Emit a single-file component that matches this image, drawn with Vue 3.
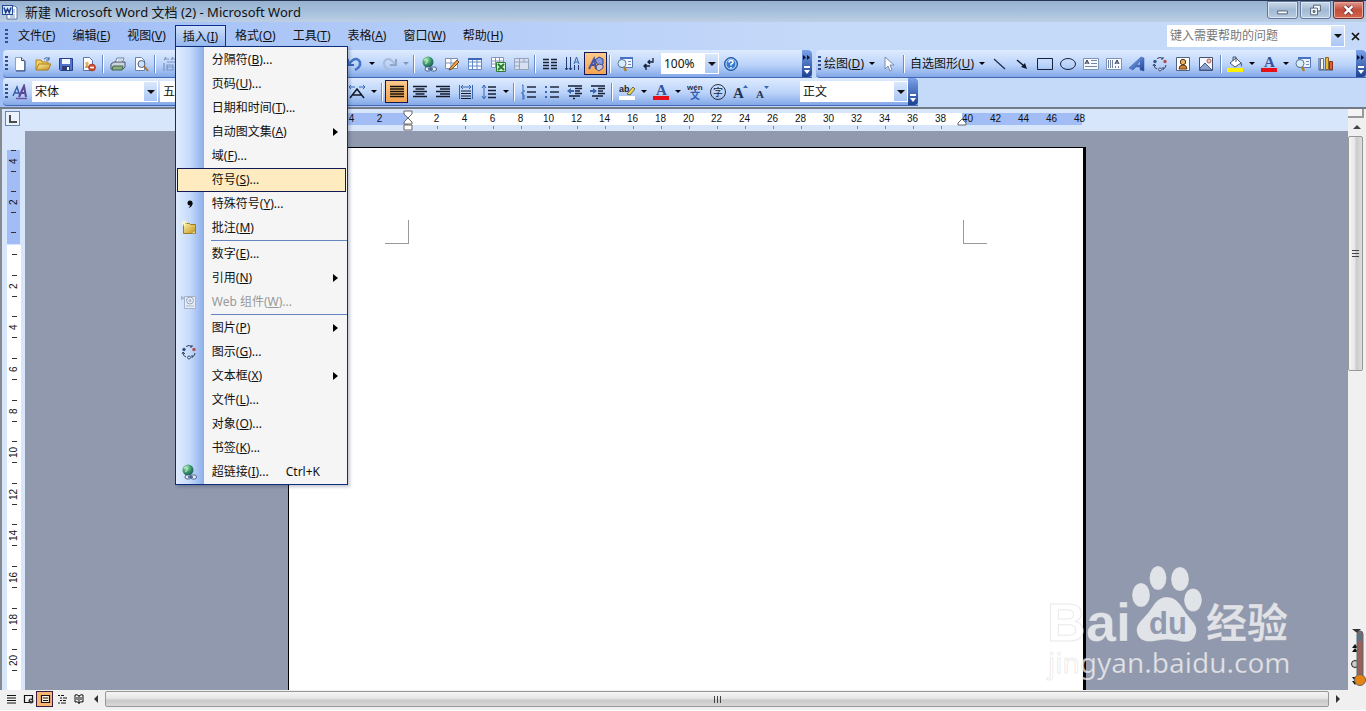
<script setup>
import { ref } from 'vue'

const menus = [
  ['文件', 'F'], ['编辑', 'E'], ['视图', 'V'], ['插入', 'I'], ['格式', 'O'],
  ['工具', 'T'], ['表格', 'A'], ['窗口', 'W'], ['帮助', 'H'],
].map(([label, key]) => ({ label, key }))

const groups = [
  [
    { label: '分隔符', key: 'B', dots: true },
    { label: '页码', key: 'U', dots: true },
    { label: '日期和时间', key: 'T', dots: true },
    { label: '自动图文集', key: 'A', sub: true },
    { label: '域', key: 'F', dots: true },
    { label: '符号', key: 'S', dots: true, active: true },
    { label: '特殊符号', key: 'Y', dots: true, icon: 'comma' },
    { label: '批注', key: 'M', icon: 'note' },
  ],
  [
    { label: '数字', key: 'E', dots: true },
    { label: '引用', key: 'N', sub: true },
    { label: 'Web 组件', key: 'W', dots: true, icon: 'web', disabled: true },
  ],
  [
    { label: '图片', key: 'P', sub: true },
    { label: '图示', key: 'G', dots: true, icon: 'diagram' },
    { label: '文本框', key: 'X', sub: true },
    { label: '文件', key: 'L', dots: true },
    { label: '对象', key: 'O', dots: true },
    { label: '书签', key: 'K', dots: true },
    { label: '超链接', key: 'I', dots: true, icon: 'link', short: 'Ctrl+K' },
  ],
]

const standardStart = ['new', 'open', 'save', 'perm', '|', 'print', 'preview', '|', 'simp']
const standardRest = ['undo', 'v', 'redo', 'vg', '|', 'link', 'tables', 'table', 'excel', 'tablegray', '|', 'columns', 'textdir', 'draw*', '|', 'docmap', 'marks']
const formatting = ['scale', 'v', '|', 'justify*', 'center', 'right', 'distribute', 'spacing', 'v', '|', 'numbers', 'bullets', 'outdent', 'indent', '|', 'highlight', 'v', 'fontcolor', 'v', 'pinyin', 'enclose', 'grow', 'shrink']
const drawing = ['line', 'arrow', 'rect', 'oval', 'textbox', 'vtextbox', 'wordart', 'diagram', 'clipart', 'picture', '|', 'fill', 'v', 'fontcolor', 'v', 'docmap', 'chart']
const views = ['vnormal', 'vweb', 'vprint*', 'voutline', 'vread']

const hTicks = Array.from({ length: 19 }, (_, i) => (i + 1) * 2)
const hTail = [40, 42, 44, 46, 48]
const vTicks = Array.from({ length: 10 }, (_, i) => (i + 1) * 2)

const font = ref('宋体')
const size = ref('五号')
const zoom = ref('100%')
const para = ref('正文')
const question = ref('')
</script>

<template>
  <div class="app">
    <svg class="sprite" aria-hidden="true">
      <defs>
        <linearGradient id="gold" x1="0" y1="0" x2="1" y2="1"><stop offset="0" stop-color="#fff3a8" /><stop offset="1" stop-color="#c09018" /></linearGradient>
        <linearGradient id="blue" x1="0" y1="0" x2="1" y2="1"><stop offset="0" stop-color="#8bb4f0" /><stop offset="1" stop-color="#1c3c98" /></linearGradient>
        <radialGradient id="globe" cx=".35" cy=".3" r=".8"><stop offset="0" stop-color="#b5ecc0" /><stop offset=".5" stop-color="#3d9a68" /><stop offset="1" stop-color="#164a5c" /></radialGradient>
      </defs>
      <symbol id="word" viewBox="0 0 16 16"><path d="M7 2h6l2 2v11H5v-4" fill="#fff" stroke="#5a76a8" /><path d="M10 6h3M10 8h3M8 11h5M8 13h5" stroke="#7896c8" /><rect x=".5" y="1.500" width="10" height="9" fill="#dce8fa" stroke="#254a92" /><path d="M2 3.500l1.700 5L5.500 5l1.700 3.500L9 3.500" fill="none" stroke="#173c8c" stroke-width="1.500" /></symbol>
      <symbol id="new" viewBox="0 0 16 16"><path d="M3.500 1.500h6l3 3v10h-9z" fill="#fff" stroke="#8aa0c8" /><path d="M9.500 1.500v3h3M13 5v10H4" fill="none" stroke="#31487c" /></symbol>
      <symbol id="open" viewBox="0 0 16 16"><path d="M1 14V4h5l1 2h6v2" fill="#f5cf60" stroke="#b58620" /><path d="M1 14L4 8h12l-3 6z" fill="url(#gold)" stroke="#a97c1a" /><path d="M9 3q3-3 5 0m0-2v3h-3" fill="none" stroke="#42619c" /></symbol>
      <symbol id="save" viewBox="0 0 16 16"><path d="M1.500 2.500h13v12h-12l-1-1z" fill="#5374c8" stroke="#26418c" /><path d="M4 3h8v5H4z" fill="#f4f7ff" /><path d="M4 10h8v4H4z" fill="#2c3d78" /><path d="M9 11h2v3H9z" fill="#fff" /></symbol>
      <symbol id="perm" viewBox="0 0 16 16"><path d="M2.500 1.500h6l3 3v10h-9z" fill="#fff" stroke="#5b74a8" /><path d="M4 12q0-3 2-3t2 3z" fill="#d99b50" /><circle cx="6" cy="7.500" r="1.700" fill="#e3ad62" /><circle cx="11" cy="11.500" r="3.500" fill="#d04a30" stroke="#8c3020" stroke-width=".6" /><path d="M9 11.500h4" stroke="#fff" stroke-width="1.600" /></symbol>
      <symbol id="print" viewBox="0 0 16 16"><path d="M5 7l2-5h7l-2 5z" fill="#fff" stroke="#6a7fa8" /><path d="M1 8l3-2h11v5l-2 2H1z" fill="#ccd3dc" stroke="#44526c" /><path d="M3 10h10l-1 4H2z" fill="#8bad80" stroke="#42644c" /><path d="M8 4h4" stroke="#9ab" /></symbol>
      <symbol id="preview" viewBox="0 0 16 16"><path d="M2.500 1.500h6l3 3v10h-9z" fill="#fff" stroke="#6b82b4" /><circle cx="8.500" cy="8" r="3.500" fill="#c5def8" fill-opacity=".9" stroke="#4b5d7c" /><path d="M11 10l4 5" stroke="#a67438" stroke-width="2" /></symbol>
      <symbol id="simp" viewBox="0 0 16 16"><path d="M4 1L2 4M3 3h4M11 1L9 4m1-1h5M2 7v8M5 6h9v9M5 9h6v5H5zm0 2h6" fill="none" stroke="#7a93c2" stroke-width="1.200" /></symbol>
      <symbol id="undo" viewBox="0 0 16 16"><path d="M1 3v6h6" fill="none" stroke="#3966bb" stroke-width="2" /><path d="M2 8Q9-1 13 6q1 5-5 8" fill="none" stroke="#4476c7" stroke-width="2.500" /></symbol>
      <symbol id="redo" viewBox="0 0 16 16"><path d="M15 3v6H9" fill="none" stroke="#91a5c7" stroke-width="2" /><path d="M14 8Q7-1 3 6q-1 5 5 8" fill="none" stroke="#a9bbd8" stroke-width="2" /></symbol>
      <symbol id="link" viewBox="0 0 16 16"><circle cx="7" cy="6" r="5.500" fill="url(#globe)" /><path d="M3 4q3-2 3 1t-2 3" fill="none" stroke="#bde7c5" /><rect x="4" y="11" width="6" height="4" rx="2" fill="#e4edfa" stroke="#4b6690" /><rect x="9.500" y="11" width="6" height="4" rx="2" fill="#e4edfa" stroke="#4b6690" /><path d="M7 13h5" stroke="#384f78" stroke-width="1.500" /></symbol>
      <symbol id="tables" viewBox="0 0 16 16"><path d="M1.500 2.500h12v10h-12zM1 7h12M7 3v9" fill="#fff" stroke="#7d8fb3" /><path d="M6 12L13 4l2 2-7 7-3 1z" fill="#f0a143" stroke="#784f24" /></symbol>
      <symbol id="table" viewBox="0 0 16 16"><path d="M1.500 2.500h13v11h-13zM1 6h13M1 10h13M5.500 3v10M10 3v10" fill="#fff" stroke="#6388c8" /><path d="M1 3h14" stroke="#3d66b4" stroke-width="2" /></symbol>
      <symbol id="excel" viewBox="0 0 16 16"><path d="M1.500 1.500h12v10h-12zM1 5h12M1 8h12M5.500 2v9M9.500 2v9" fill="#fff" stroke="#8294b8" /><path d="M6.500 6.500h9v9h-9z" fill="#d7f1d2" stroke="#267a31" /><path d="M8 8l6 6m0-6l-6 6" stroke="#257c32" stroke-width="2" /></symbol>
      <symbol id="tablegray" viewBox="0 0 16 16"><path d="M1.500 2.500h14v11h-14zM1 6h14M6.500 3v10M1 10h5M11 3v3" fill="#d6e0f0" stroke="#95a3bd" /></symbol>
      <symbol id="columns" viewBox="0 0 16 16"><path d="M1 3.500h6M1 6.500h6M1 9.500h6M1 12.500h6M9 3.500h6M9 6.500h6M9 9.500h6M9 12.500h6" stroke="#1d2233" stroke-width="1.600" /></symbol>
      <symbol id="textdir" viewBox="0 0 16 16"><path d="M1.500 1v13M5.500 1v13M9.500 9v5M13.500 9v5" stroke="#243c72" /><path d="M9 8l2.500-7L14 8M10 6h3" fill="none" stroke="#3b64ae" /><path d="M0 12l1.500 2L3 12M4 12l1.500 2L7 12" fill="none" stroke="#243c72" /></symbol>
      <symbol id="draw" viewBox="0 0 16 16"><path d="M7 4l4-3 4 2v5l-4 3z" fill="#8a9bd8" stroke="#2f438c" /><path d="M8 10l3-2 4 1v3l-4 3-3-2z" fill="#c8c6d8" stroke="#4b5184" /><path d="M1 13L6 3l2 10M3 9h4" fill="none" stroke="#4855a2" stroke-width="2" /></symbol>
      <symbol id="docmap" viewBox="0 0 16 16"><path d="M3.500 1.500h12v10h-12z" fill="#eef5ff" stroke="#5575b4" /><path d="M3 2h13" stroke="#4673c5" stroke-width="2" /><path d="M11 5.500h3M11 8.500h3" stroke="#778cb4" /><circle cx="5" cy="7.500" r="4" fill="#d8ecfb" stroke="#5b7591" /><path d="M7 11l2 4" stroke="#ad802e" stroke-width="2.500" /></symbol>
      <symbol id="marks" viewBox="0 0 16 16"><path d="M13 2v4H8m2-2L8 6l2 2M10 10H4m2-2l-2 2 2 2M6 8v6" fill="none" stroke="#17213a" stroke-width="1.300" /></symbol>
      <symbol id="help" viewBox="0 0 16 16"><circle cx="8" cy="8" r="6.500" fill="#3578ce" stroke="#245698" /><circle cx="8" cy="8" r="5" fill="none" stroke="#c6e3ff" /><path d="M6 6.500q0-2 2-2t2 1.700q0 1-2 2v1.300M8 11v1.300" fill="none" stroke="#fff" stroke-width="1.500" /></symbol>
      <symbol id="aa" viewBox="0 0 16 16"><path d="M1 12L5 3l3 9M2 9h5" fill="none" stroke="#3559ac" stroke-width="1.400" /><path d="M7 13l5-11 2 11M9 9h5" fill="none" stroke="#5b4894" stroke-width="2" /><path d="M4 14.500h11" stroke="#7254a8" stroke-width="1.500" /></symbol>
      <symbol id="scale" viewBox="0 0 16 16"><path d="M1 14l7-9 7 9M4 11h8" fill="none" stroke="#101828" stroke-width="1.500" /><path d="M0 3h6M2 1L0 3l2 2M10 3h6m-2-2l2 2-2 2" fill="none" stroke="#356bb8" /></symbol>
      <symbol id="justify" viewBox="0 0 16 16"><path d="M1 2.500h14M1 5h14M1 7.500h14M1 10h14M1 12.500h14" stroke="#16100a" stroke-width="1.400" /></symbol>
      <symbol id="center" viewBox="0 0 16 16"><path d="M1 2.500h14M3.500 5h9M1 7.500h14M3.500 10h9M1 12.500h14" stroke="#141b2c" stroke-width="1.400" /></symbol>
      <symbol id="right" viewBox="0 0 16 16"><path d="M1 2.500h14M5 5h10M1 7.500h14M5 10h10M1 12.500h14" stroke="#141b2c" stroke-width="1.400" /></symbol>
      <symbol id="distribute" viewBox="0 0 16 16"><path d="M1.500 1v14M14.500 1v14M3 3h10M5 1L3 3l2 2M11 1l2 2-2 2" fill="none" stroke="#3564af" /><path d="M3 7h10M3 9.500h10M3 12h10M3 14.500h10" stroke="#141b2c" /></symbol>
      <symbol id="spacing" viewBox="0 0 16 16"><path d="M3 1v14M1 4l2-3 2 3M1 12l2 3 2-3" fill="none" stroke="#3969b4" /><path d="M7 3h8M7 6.500h8M7 10h8M7 13.500h8" stroke="#172036" stroke-width="1.300" /></symbol>
      <symbol id="numbers" viewBox="0 0 16 16"><path d="M6 3h9M6 8h9M6 13h9" stroke="#202a40" stroke-width="1.300" /><path d="M1 1h1v4M1 6h2v2H1v2h2M1 11h2v4H1m0-2h2" fill="none" stroke="#3768b4" /></symbol>
      <symbol id="bullets" viewBox="0 0 16 16"><path d="M6 3h9M6 8h9M6 13h9" stroke="#202a40" stroke-width="1.300" /><path d="M1 2h2v2H1zM1 7h2v2H1zM1 12h2v2H1z" fill="#3768b4" /></symbol>
      <symbol id="outdent" viewBox="0 0 16 16"><path d="M1 2h14M8 4.500h7M8 7h5M8 9.500h7M2 12h11M6 14.500h2" stroke="#172036" stroke-width="1.400" /><path d="M0 7l4-3v2h3v2H4v2z" fill="#3967b0" /></symbol>
      <symbol id="indent" viewBox="0 0 16 16"><path d="M1 2h14M8 4.500h7M8 7h5M8 9.500h7M2 12h11M6 14.500h2" stroke="#172036" stroke-width="1.400" /><path d="M7 7L3 4v2H0v2h3v2z" fill="#3967b0" /></symbol>
      <symbol id="cursor" viewBox="0 0 16 16"><path d="M4 1v12l3-3 2 5 2-1-2-5h4z" fill="#fff" stroke="#7b8cae" /></symbol>
      <symbol id="line" viewBox="0 0 16 16"><path d="M3 3l11 10" stroke="#1d2b4c" stroke-width="1.200" /></symbol>
      <symbol id="arrow" viewBox="0 0 16 16"><path d="M3 4l7 6" stroke="#111a2c" stroke-width="1.500" /><path d="M13 13L7 11l4-4z" fill="#111a2c" /></symbol>
      <symbol id="rect" viewBox="0 0 16 16"><path d="M.5 2.500h15v11H.5z" fill="none" stroke="#17213c" /></symbol>
      <symbol id="oval" viewBox="0 0 16 16"><ellipse cx="8" cy="8" rx="7.500" ry="5.500" fill="none" stroke="#17213c" /></symbol>
      <symbol id="textbox" viewBox="0 0 16 16"><path d="M.5 2.500h15v11H.5z" fill="#f8fbff" stroke="#7c93b8" /><path d="M2 8l2-4 2 4M3 7h2" fill="none" stroke="#26324a" /><path d="M8 4.500h6M8 7.500h6M2 10.500h12" fill="none" stroke="#7283a4" /></symbol>
      <symbol id="vtextbox" viewBox="0 0 16 16"><path d="M.5 2.500h15v11H.5z" fill="#f8fbff" stroke="#7c93b8" /><path d="M9 8l2-4 2 4M10 7h2" fill="none" stroke="#26324a" /><path d="M2.500 4v8M4.500 4v8M6.500 4v8M9.500 10v2M12.500 10v2" fill="none" stroke="#7283a4" /></symbol>
      <symbol id="wordart" viewBox="0 0 16 16"><path d="M0 12L12 1l3 1v13l-4-1v-3H7l-3 3zm8-3h3V5z" fill="url(#blue)" fill-rule="evenodd" stroke="#3c69bc" stroke-width=".6" /></symbol>
      <symbol id="diagram" viewBox="0 0 16 16"><path d="M5 2.500q3-2 6 0M11 1v2H9M14 9q0 3-3 4m0-2v3M5 13q-3-1-3-4m-1 1l1-2 2 2" fill="none" stroke="#34415e" /><circle cx="3" cy="5.500" r="1.700" fill="#3a5583" /><circle cx="13" cy="5.500" r="1.700" fill="#b34b50" /><circle cx="8" cy="13.500" r="1.500" fill="#cbd8ec" stroke="#435574" /></symbol>
      <symbol id="clipart" viewBox="0 0 16 16"><path d="M1.500 1.500h13v13h-13z" fill="#fff" stroke="#53617e" /><path d="M4 13q0-4 4-4t4 4z" fill="#d4812d" stroke="#613d1c" /><circle cx="8" cy="6" r="2.700" fill="#f0b35a" stroke="#523622" /></symbol>
      <symbol id="picture" viewBox="0 0 16 16"><path d="M1.500 1.500h13v13h-13z" fill="#f5f8ff" stroke="#45516d" /><path d="M2 12l5-5 3 3 4 4H2z" fill="#8da1cf" stroke="#465a8a" /><circle cx="11" cy="5" r="2" fill="#f0c8c4" stroke="#b05c58" /></symbol>
      <symbol id="fill" viewBox="0 0 16 16"><path d="M0 12h16v4H0z" fill="#fff200" /><path d="M3 7l6-5 5 5-6 4z" fill="#fff" stroke="#48566e" /><path d="M6 5V1h3v5" fill="none" stroke="#48566e" /><path d="M14 6q2 2 1 5-2-1-1-5" fill="#3c68b4" /></symbol>
      <symbol id="chart" viewBox="0 0 16 16"><path d="M1 2v12h14" fill="none" stroke="#445a85" /><path d="M2.500 2.500h3v11h-3z" fill="#f5f5e8" stroke="#64718c" /><path d="M7.500 1.500h3v12h-3z" fill="#e9bb3a" stroke="#8d6420" /><path d="M11.500 5.500h3v8h-3z" fill="#d96238" stroke="#813520" /></symbol>
      <symbol id="comma" viewBox="0 0 16 16"><circle cx="9" cy="7" r="2.500" fill="#080808" /><path d="M11.500 7q0 4-4 5 2-2 2-4" fill="#080808" /></symbol>
      <symbol id="note" viewBox="0 0 16 16"><path d="M2.500 3.500h6l1 1h5v9h-12z" fill="url(#gold)" stroke="#9c7c23" /><path d="M14 13.500h-4l4-3z" fill="#fff1a9" stroke="#9c7c23" stroke-width=".6" /><path d="M3 0v6M0 3h6M1 1l4 4m0-4L1 5" stroke="#fff7c3" /></symbol>
      <symbol id="web" viewBox="0 0 16 16"><path d="M3.500 2.500h11v12h-11z" fill="#e8edf5" stroke="#a5b4cc" /><circle cx="9" cy="6.500" r="3.500" fill="none" stroke="#95a5bf" /><circle cx="9" cy="6.500" r="1.500" fill="#aebbd0" /><path d="M0 2l3 2-3 2zM5 12h8" fill="#a8b7d0" stroke="#a8b7d0" /></symbol>
      <symbol id="vnormal" viewBox="0 0 16 16"><path d="M4 4.500h9M4 7h9M4 9.500h9M4 12h9" stroke="#111" stroke-width="1.200" /></symbol>
      <symbol id="vweb" viewBox="0 0 16 16"><path d="M10 11.500H4.500v-7h8v4" fill="none" stroke="#111" stroke-width="1.200" /><circle cx="11" cy="10" r="2.500" fill="#333" /><path d="M10 9l2 1" stroke="#fff" /></symbol>
      <symbol id="vprint" viewBox="0 0 16 16"><path d="M4.500 4.500h8v7h-8z" fill="#fff2de" stroke="#111" stroke-width="1.200" /><path d="M6 7h5M6 9.500h5" stroke="#111" /></symbol>
      <symbol id="voutline" viewBox="0 0 16 16"><path d="M4 4.500h2m1 0h3M6 7h2m1 0h4M6 9.500h2m1 0h3M4 12h2m1 0h5" stroke="#111" stroke-width="1.200" /></symbol>
      <symbol id="vread" viewBox="0 0 16 16"><path d="M8 5v8M8 5q-2-2-4-1v7q2-1 4 1 2-2 4-1V4q-2-1-4 1M6 6v3M10 6v3" fill="none" stroke="#111" /></symbol>
    </svg>
    <svg class="letters" aria-hidden="true">
      <symbol id="highlight" viewBox="0 0 16 16"><path d="M0 12h16v4H0z" fill="#fff" /><text x="0" y="8" font-family="Liberation Sans" font-size="9" font-weight="bold" fill="#23242c">ab</text><path d="M8 10l6-7 2 2-5 6z" fill="#f0d64a" stroke="#67694a" /></symbol>
      <symbol id="fontcolor" viewBox="0 0 16 16"><path d="M0 12h16v4H0z" fill="#e81018" /><text x="3" y="11" font-family="Liberation Serif" font-size="15" font-weight="bold" fill="#34549a">A</text></symbol>
      <symbol id="pinyin" viewBox="0 0 16 16"><text x="0" y="6" font-family="Liberation Sans" font-size="8" font-weight="bold" fill="#293142">wén</text><text x="3" y="15" font-family="Noto Sans CJK SC" font-size="10" font-weight="bold" fill="#3260b5">文</text></symbol>
      <symbol id="enclose" viewBox="0 0 16 16"><circle cx="8" cy="8" r="7.500" fill="none" stroke="#27303c" /><text x="3" y="12" font-family="Noto Sans CJK SC" font-size="10" fill="#18202d">字</text></symbol>
      <symbol id="grow" viewBox="0 0 16 16"><text x="0" y="14" font-family="Liberation Serif" font-size="15" font-weight="bold" fill="#26334c">A</text><path d="M10 4l2.500-3L15 4z" fill="#3968b0" /></symbol>
      <symbol id="shrink" viewBox="0 0 16 16"><text x="0" y="14" font-family="Liberation Serif" font-size="11" font-weight="bold" fill="#26334c">A</text><path d="M8 2h5l-2.500 3z" fill="#3968b0" /></symbol>
    </svg>

    <header class="title">
      <svg class="ic"><use href="#word" /></svg>
      <h1>新建 Microsoft Word 文档 (2) - Microsoft Word</h1>
      <div class="winbtns">
        <button aria-label="最小化"><svg viewBox="0 0 30 16"><path d="M10 9h10v3H10z" fill="#fff" stroke="#4c5d75" /></svg></button>
        <button aria-label="还原"><svg viewBox="0 0 30 16"><path d="M13 3h7v6h-7z" fill="#fff" stroke="#4c5d75" /><path d="M10 6h7v7h-7z" fill="#fff" stroke="#4c5d75" /><path d="M12.500 8.500h2v2h-2z" fill="#a5bad4" stroke="#4c5d75" /></svg></button>
        <button class="x" aria-label="关闭"><svg viewBox="0 0 30 16"><path d="M11 4l8 8m0-8l-8 8" stroke="#5c3036" stroke-width="4" /><path d="M11 4l8 8m0-8l-8 8" stroke="#fff" stroke-width="2.500" /></svg></button>
      </div>
    </header>

    <nav class="menubar">
      <i class="grip"></i>
      <div v-for="m in menus" :key="m.key" class="menuwrap">
        <button class="menu" :class="{ open: m.key === 'I' }">{{ m.label }}(<u>{{ m.key }}</u>)</button>
        <div v-if="m.key === 'I'" class="dropdown">
          <ul v-for="(g, i) in groups" :key="i">
            <li v-for="it in g" :key="it.label">
              <button class="entry" :class="{ active: it.active }" :disabled="it.disabled">
                <span class="slot"><svg v-if="it.icon" class="ic"><use :href="'#' + it.icon" /></svg></span>
                <span>{{ it.label }}(<u>{{ it.key }}</u>){{ it.dots ? '...' : '' }}</span>
                <span v-if="it.short" class="short">{{ it.short }}</span>
                <i v-if="it.sub" class="sub"></i>
              </button>
            </li>
          </ul>
        </div>
      </div>
      <div class="ask">
        <input v-model="question" type="text" placeholder="键入需要帮助的问题" aria-label="键入需要帮助的问题">
        <i class="drop"></i>
      </div>
      <button class="closedoc" aria-label="关闭窗口"><svg viewBox="0 0 9 9"><path d="M1 1l7 7m0-7L1 8" stroke="#111" stroke-width="1.700" /></svg></button>
    </nav>

    <div class="row">
      <div class="bar standard">
        <i class="grip"></i>
        <template v-for="(t, i) in standardStart" :key="i">
          <i v-if="t === '|'" class="sep"></i>
          <button v-else class="tool" :aria-label="t"><svg class="ic"><use :href="'#' + t" /></svg></button>
        </template>
        <div class="rest">
          <template v-for="(t, i) in standardRest" :key="i">
            <i v-if="t === '|'" class="sep"></i>
            <i v-else-if="t[0] === 'v'" class="caret" :class="{ dim: t === 'vg' }"></i>
            <button v-else class="tool" :class="{ on: t.endsWith('*') }" :aria-label="t"><svg class="ic"><use :href="'#' + t.replace('*', '')" /></svg></button>
          </template>
          <div class="combo zoom"><select v-model="zoom" aria-label="显示比例"><option>100%</option></select><i class="drop"></i></div>
          <button class="tool" aria-label="帮助"><svg class="ic"><use href="#help" /></svg></button>
        </div>
        <i class="cap"><svg class="more" viewBox="0 0 8 5"><path d="M0 0l3 2.500L0 5zM4 0l3 2.500L4 5z" fill="#0b1230" /></svg></i>
      </div>
      <div class="bar drawing">
        <i class="grip"></i>
        <button class="word">绘图(<u>D</u>)</button><i class="caret"></i>
        <button class="tool" aria-label="选择对象"><svg class="ic"><use href="#cursor" /></svg></button>
        <i class="sep"></i>
        <button class="word">自选图形(<u>U</u>)</button><i class="caret"></i>
        <template v-for="(t, i) in drawing" :key="i">
          <i v-if="t === '|'" class="sep"></i>
          <i v-else-if="t === 'v'" class="caret"></i>
          <button v-else class="tool" :aria-label="t"><svg class="ic"><use :href="'#' + t" /></svg></button>
        </template>
        <i class="cap"><svg class="more" viewBox="0 0 8 5"><path d="M0 0l3 2.500L0 5zM4 0l3 2.500L4 5z" fill="#0b1230" /></svg></i>
      </div>
    </div>

    <div class="row">
      <div class="bar formatting">
        <i class="grip"></i>
        <button class="tool" aria-label="样式和格式"><svg class="ic"><use href="#aa" /></svg></button>
        <div class="combo font"><select v-model="font" aria-label="字体"><option>宋体</option></select><i class="drop"></i></div>
        <div class="combo size"><select v-model="size" aria-label="字号"><option>五号</option></select><i class="drop"></i></div>
        <div class="rest">
          <template v-for="(t, i) in formatting" :key="i">
            <i v-if="t === '|'" class="sep"></i>
            <i v-else-if="t === 'v'" class="caret"></i>
            <button v-else class="tool" :class="{ on: t.endsWith('*') }" :aria-label="t"><svg class="ic"><use :href="'#' + t.replace('*', '')" /></svg></button>
          </template>
        </div>
        <div class="combo para"><select v-model="para" aria-label="样式"><option>正文</option></select><i class="drop"></i></div>
        <i class="cap"></i>
      </div>
    </div>

    <main class="work">
      <aside class="vruler">
        <button class="tab" aria-label="制表符"></button>
        <div class="vband blue">
          <div v-for="n in [4, 2]" :key="n" class="vcell"><i></i><span>{{ n }}</span><i></i></div>
          <i class="vtick"></i>
        </div>
        <div class="vband white">
          <i class="vtick"></i>
          <div class="vcells">
            <div v-for="n in vTicks" :key="n" class="vcell"><i></i><span>{{ n }}</span><i></i></div>
          </div>
        </div>
      </aside>
      <section class="center">
        <div class="hruler">
          <div class="hband">
            <div class="pre"><span>4</span><span>2</span></div>
            <div class="mid"><span v-for="n in hTicks" :key="n">{{ n }}</span></div>
            <div class="post"><span v-for="n in hTail" :key="n">{{ n }}</span></div>
            <svg class="mark left" viewBox="0 0 10 22"><path d="M1 1h8v3L5 8 1 4zM5 8l4 4v2H1v-2zM1 15h8v5H1z" fill="#fff" stroke="#666" /></svg>
            <svg class="mark right" viewBox="0 0 10 22"><path d="M5 9l4 4v2H1v-2z" fill="#fff" stroke="#666" /></svg>
          </div>
        </div>
        <div class="canvas">
          <article class="page"><i class="corner a"></i><i class="corner b"></i></article>
        </div>
      </section>
      <aside class="vscroll">
        <i class="split"></i>
        <button class="up" aria-label="向上"></button>
        <div class="vthumb"><i></i><i></i><i></i></div>
        <div class="browse">
          <svg viewBox="0 0 18 62"><path d="M4 1h9l-4 4z" fill="#333" /><path d="M7 16l3 4H4zm0 4l3 4H4z" fill="#111" /><circle cx="7" cy="36" r="3.500" fill="#ccc" stroke="#222" /><path d="M4 49h6l-3 4zm0 4h6l-3 4z" fill="#111" /><rect x="9" y="3" width="6" height="47" rx="3" fill="#996059" stroke="#566871" /><path d="M10 5h4v8h-4z" fill="#587483" /><circle cx="12" cy="52" r="5.500" fill="#e58315" stroke="#6b6560" /></svg>
        </div>
      </aside>
      <svg class="brand" viewBox="0 0 250 120" role="img" aria-label="Baidu 经验">
        <g class="ink">
          <text x="2" y="76" font-family="Liberation Sans" font-size="54" font-weight="bold">Bai</text>
          <ellipse cx="96" cy="30" rx="9" ry="12" /><ellipse cx="113" cy="13" rx="8.500" ry="12" /><ellipse cx="135" cy="14" rx="9" ry="12" /><ellipse cx="148" cy="35" rx="9" ry="11.500" />
          <path d="M122 32c10 0 14 9 19 16 7 9 12 13 10 20-2 9-10 10-17 8-8-2-16-2-24 0-9 2-16-1-18-8-2-8 4-12 11-20 6-8 9-16 19-16z" />
          <text x="161" y="73" font-family="Noto Sans CJK SC" font-size="41" font-weight="bold">经验</text>
          <text x="3" y="108" font-family="Noto Sans" font-size="28">jingyan.baidu.com</text>
        </g>
        <text x="104" y="69" font-family="Liberation Sans" font-size="31" font-weight="bold" fill="#9199ae">du</text>
      </svg>
    </main>

    <footer class="status">
      <button v-for="v in views" :key="v" class="view" :class="{ on: v.endsWith('*') }" :aria-label="v"><svg class="ic"><use :href="'#' + v.replace('*', '')" /></svg></button>
      <button class="side back" aria-label="向左"></button>
      <div class="hthumb"><i></i><i></i><i></i></div>
      <button class="side next" aria-label="向右"></button>
    </footer>
  </div>
</template>

<style>
body { margin: 0; overflow: hidden; }
</style>

<style scoped>
* { box-sizing: border-box; }
.app { height: 100vh; display: flex; flex-direction: column; font: 12px/16px "Noto Sans", "Noto Sans CJK SC", sans-serif; color: #111; background: linear-gradient(90deg, #9fbdf6, #c5d9f9 60%); overflow: hidden; }
.sprite { position: absolute; width: 0; height: 0; }
.letters { display: none; }
button { padding: 0; border: 0; background: none; font: inherit; color: inherit; }
ul { list-style: none; margin: 0; padding: 0; }
i { font-style: normal; flex: none; }
.ic { width: 16px; height: 16px; display: block; flex: none; }

.title { height: 22px; flex: none; display: flex; align-items: center; gap: 7px; padding: 0 2px; border-top: 1px solid #24344f; background: linear-gradient(#97b2d0, #a5bfdb 50%, #bdcfe4); }
.title h1 { margin: 0; flex: 1; font-size: 13px; font-weight: 400; line-height: 18px; }
.winbtns { display: flex; gap: 2px; align-self: flex-start; }
.winbtns button { width: 31px; height: 18px; border: 1px solid #61789a; border-radius: 0 0 3px 3px; background: linear-gradient(#c9d8e9, #a2b9d3 50%, #b9cde2); box-shadow: inset 0 0 0 1px #dbe7f3; }
.winbtns svg { display: block; width: 29px; height: 16px; }
.winbtns .x { background: linear-gradient(#dd9b8e, #c44c3b 50%, #d2654d); border-color: #6f2c2c; box-shadow: inset 0 0 0 1px #e7aba0; }

.menubar { height: 28px; flex: none; display: flex; align-items: center; gap: 1px; padding: 0 5px 0 4px; position: relative; z-index: 5; }
.grip { width: 3px; height: 15px; background: repeating-linear-gradient(#334f8c 0 2px, transparent 2px 4px); margin: 0 1px; }
.menuwrap { position: relative; }
.menu { height: 22px; padding: 0 7px; border: 1px solid transparent; white-space: nowrap; display: block; }
.menu.open { border-color: #0a2f8c; border-bottom: 0; background: linear-gradient(#cfe0fb, #92b5ef); }
.dropdown { position: absolute; left: 0; top: 21px; width: 173px; padding: 1px 0 0; border: 1px solid #0a2f7c; background: linear-gradient(90deg, #e0ecfe, #c6dbfb 14px, #8badea 28px, #f5f5f5 28px); box-shadow: 2px 2px 3px rgba(20, 30, 70, .25); }
.dropdown ul + ul { padding-top: 2px; background: linear-gradient(#6585bf, #6585bf) 35px 0 / 100% 1px no-repeat; }
.entry { width: 169px; height: 24px; margin-left: 1px; display: flex; align-items: center; text-align: left; position: relative; white-space: nowrap; }
.entry .slot { width: 35px; padding-left: 4px; }
.entry.active { border: 1px solid #101858; background: #feecc0; }
.entry.active .slot { width: 34px; }
.entry:disabled { color: #999; }
.short { margin-left: 17px; }
.sub { border: 4px solid transparent; border-left: 5px solid #000; border-right: 0; margin-left: auto; margin-right: 8px; }
.ask { margin-left: auto; width: 178px; height: 22px; display: flex; background: #fff; padding: 1px; margin-right: 4px; }
.ask input { flex: 1; min-width: 0; border: 0; padding: 0 2px; font: inherit; outline: 0; background: none; }
.ask input::placeholder { color: #777; }
.drop { width: 13px; background: linear-gradient(#dbe8fd, #a9c6f5); display: flex; align-items: center; justify-content: center; }
.drop::after { content: ""; border: 4px solid transparent; border-top-color: #111; border-bottom: 0; }
.closedoc { width: 11px; height: 16px; display: flex; align-items: center; justify-content: center; }
.closedoc svg { width: 9px; height: 9px; }

.row { display: flex; height: 28px; flex: none; gap: 4px; }
.row .bar:first-child { margin-left: 3px; }
.bar { height: 28px; display: flex; align-items: center; padding-left: 2px; border-bottom: 1px solid #4468b5; border-radius: 4px 0 0 4px; background: linear-gradient(#deebfe, #bbd3fa 55%, #83a8e8); }
.bar .grip { margin: 0; }
.standard { width: 809px; flex: none; }
.drawing { flex: 1; min-width: 0; padding-left: 2px; }
.formatting { width: 915px; flex: none; }
.rest { display: flex; align-items: center; }
.standard .rest { margin-left: 162px; }
.formatting .rest { margin-left: 135px; }
.tool { width: 23px; height: 23px; flex: none; display: flex; align-items: center; justify-content: center; }
.tool.on { border: 1px solid #101858; background: linear-gradient(#fdc98b, #f4a453); }
.sep { width: 1px; height: 18px; margin: 0 3px 0 2px; background: #6a8ccb; box-shadow: 1px 0 #fff; }
.caret { width: 11px; display: flex; justify-content: center; }
.caret::after { content: ""; border: 3px solid transparent; border-top-color: #000; border-bottom: 0; }
.caret.dim::after { border-top-color: #7f96bf; }
.word { white-space: nowrap; padding: 0 3px; }
.combo { height: 21px; display: flex; background: #fff; padding: 1px; flex: none; }
.combo select { flex: 1; min-width: 0; appearance: none; border: 0; padding: 0 2px; background: #fff; font: inherit; color: #111; outline: 0; }
.zoom { width: 58px; margin-left: 2px; }
.font { width: 126px; margin-left: 1px; }
.size { width: 50px; margin-left: 2px; }
.para { width: 108px; margin-left: 25px; }
.cap { width: 10px; height: 27px; margin-left: auto; border-radius: 0 4px 4px 0; background: linear-gradient(#7ba2ea, #1b4191); display: flex; flex-direction: column; align-items: center; justify-content: flex-end; padding-bottom: 3px; position: relative; }
.more { position: absolute; left: 1px; top: 5px; width: 8px; height: 5px; }
.cap::before { content: ""; width: 6px; height: 2px; background: #fff; margin-bottom: 2px; }
.cap::after { content: ""; border: 3px solid transparent; border-top: 4px solid #fff; border-bottom: 0; }

.work { flex: 1; min-height: 0; display: flex; position: relative; border-top: 2px solid #737b86; margin-top: 1px; background: #d8e6fb; }
.vruler { width: 25px; flex: none; border-left: 2px solid #858a90; display: flex; flex-direction: column; padding-left: 5px; overflow: hidden; }
.tab { width: 15px; height: 15px; flex: none; margin-top: 2px; margin-left: -2px; border: 1px solid #6b83ae; background: #eaf2fe; display: flex; align-items: center; justify-content: center; }
.tab::after { content: ""; width: 6px; height: 6px; border: 2px solid #4b4b4b; border-width: 0 0 2px 2px; }
.vband { width: 13px; display: flex; flex-direction: column; overflow: hidden; font: 10px/12px "Liberation Sans", sans-serif; }
.vband.blue { height: 94px; flex: none; margin-top: 24px; background: #a2bdf5; justify-content: flex-end; }
.vband.blue .vcell { height: 41px; flex: none; }
.vband.blue .vtick { margin: 10px 0 11px; }
.vband.white { flex: 1; min-height: 0; margin-top: 1px; background: #fff; width: 14px; }
.vband.white .vtick { margin: 9px 0 10px; }
.vtick, .vcell i { width: 5px; height: 1px; align-self: center; background: #333; }
.vcells { height: 416px; flex: none; display: flex; flex-direction: column; }
.vcells .vcell { flex: 1; }
.vcell { display: flex; flex-direction: column; align-items: center; justify-content: center; }
.vcell span { height: 20px; writing-mode: vertical-rl; transform: rotate(180deg); text-align: center; }
.center { flex: 1; min-width: 0; display: flex; flex-direction: column; align-items: stretch; }
.hruler { height: 22px; flex: none; display: flex; justify-content: center; padding-top: 4px; }
.hband { width: 798px; flex: none; height: 12px; display: flex; position: relative; font: 10px/12px "Liberation Sans", sans-serif; }
.hband span { width: 28px; flex: none; text-align: center; position: relative; }
.hband .mid span::after { content: ""; position: absolute; left: 14px; top: 13px; width: 1px; height: 3px; background: #7d8794; }
.pre { width: 120px; background: #a2bdf5; display: flex; justify-content: flex-end; padding-right: 14px; }
.mid { width: 554px; background: #fff; display: flex; padding-left: 15px; }
.post { width: 120px; background: #a2bdf5; display: flex; justify-content: flex-end; }
.post span:last-child { margin-right: -12px; }
.mark { position: absolute; width: 10px; height: 22px; top: -3px; }
.mark.left { left: 115px; }
.mark.right { left: 669px; }
.canvas { flex: 1; min-height: 0; background: #9199ae; display: flex; justify-content: center; padding-top: 16px; overflow: hidden; }
.page { width: 798px; flex: none; background: #fff; border: 1px solid #000; border-right-width: 3px; border-bottom: 0; position: relative; }
.corner { position: absolute; top: 72px; width: 24px; height: 24px; border: 0 solid #999; border-bottom-width: 1px; }
.corner.a { left: 96px; border-right-width: 1px; }
.corner.b { right: 96px; border-left-width: 1px; }
.vscroll { width: 18px; flex: none; background: #f0f0f0; display: flex; flex-direction: column; }
.split { height: 9px; width: 16px; border: 1px solid #999; border-width: 0 2px 2px 0; background: #f4f4f4; }
.up { height: 18px; width: 17px; display: flex; align-items: center; justify-content: center; }
.up::after { content: ""; border: 4px solid transparent; border-bottom-color: #444; border-top: 0; }
.vthumb { width: 15px; height: 235px; border: 1px solid #979797; border-radius: 2px; background: linear-gradient(90deg, #f5f5f5, #e6e6e6 45%, #cacaca 55%, #dedede); display: flex; flex-direction: column; justify-content: center; align-items: center; gap: 2px; }
.vthumb i { width: 7px; height: 1px; background: #444; }
.browse { margin-top: auto; }
.browse svg { width: 18px; height: 62px; display: block; }
.brand { position: absolute; right: 71px; bottom: 5px; width: 250px; height: 120px; pointer-events: none; }
.brand .ink { fill: #fff; fill-opacity: .72; stroke: #777; stroke-opacity: .16; stroke-width: 1; }

.status { height: 21px; flex: none; display: flex; background: #f0f0f0; padding: 1px 19px 0 2px; border-bottom: 1px solid #fff; }
.view { width: 17px; height: 16px; display: flex; align-items: center; justify-content: center; }
.view.on { border: 1px solid #3a1d40; background: #f8b571; }
.side { width: 18px; height: 16px; display: flex; align-items: center; justify-content: center; }
.side::after { content: ""; border: 4px solid transparent; border-right-color: #333; border-left: 0; }
.side.next::after { border: 4px solid transparent; border-left-color: #333; border-right: 0; }
.hthumb { flex: 1; height: 16px; border: 1px solid #979797; border-radius: 2px; background: linear-gradient(#f5f5f5, #e6e6e6 45%, #cacaca 60%, #d8d8d8); display: flex; justify-content: center; align-items: center; gap: 2px; }
.hthumb i { width: 1px; height: 7px; background: #444; }
</style>
